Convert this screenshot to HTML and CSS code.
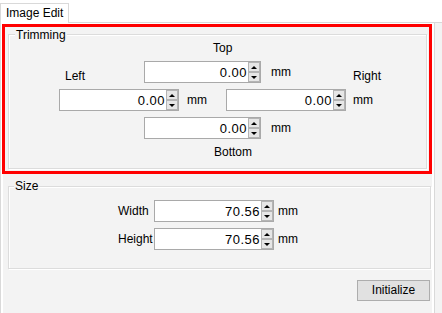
FILE: index.html
```html
<!DOCTYPE html>
<html>
<head>
<meta charset="utf-8">
<link rel="stylesheet" href="styles.css">
</head>
<body>
<div class="tabs"><div class="tab">Image Edit</div></div>
<div class="tabctl">
  <div class="display">
    <div class="page">
      <div class="group trim">
        <span class="legend">Trimming</span>
        <div class="trim-grid">
          <span class="lbl c-top">Top</span>
          <span class="lbl c-left">Left</span>
          <div class="spin s-top"><span class="val">0.00</span><span class="arrows"><span class="up"></span><span class="dn"></span></span></div>
          <span class="mm m-top">mm</span>
          <span class="lbl c-right">Right</span>

          <div class="spin s-left"><span class="val">0.00</span><span class="arrows"><span class="up"></span><span class="dn"></span></span></div>
          <span class="mm m-left">mm</span>
          <div class="spin s-right"><span class="val">0.00</span><span class="arrows"><span class="up"></span><span class="dn"></span></span></div>
          <span class="mm m-right">mm</span>

          <div class="spin s-bottom"><span class="val">0.00</span><span class="arrows"><span class="up"></span><span class="dn"></span></span></div>
          <span class="mm m-bottom">mm</span>

          <span class="lbl c-bottom">Bottom</span>
        </div>
      </div>

      <div class="group size">
        <span class="legend size-legend">Size</span>
        <div class="size-row">
          <span class="size-label">Width</span>
          <div class="spin s-size"><span class="val">70.56</span><span class="arrows"><span class="up"></span><span class="dn"></span></span></div>
          <span class="mm size-mm">mm</span>
        </div>
        <div class="size-row">
          <span class="size-label">Height</span>
          <div class="spin s-size"><span class="val">70.56</span><span class="arrows"><span class="up"></span><span class="dn"></span></span></div>
          <span class="mm size-mm">mm</span>
        </div>
      </div>

      <div class="btn-row"><button class="btn">Initialize</button></div>
    </div>
  </div>
</div>
<div class="highlight"></div>
</body>
</html>
```
FILE: styles.css
```css
html, body {
  margin: 0;
  height: 100%;
}
body {
  font-family: "Liberation Sans", Arial, sans-serif;
  font-size: 12px;
  color: #000;
  background: #fff;
  display: flex;
  flex-direction: column;
  overflow: hidden;
}
.tabs {
  height: 22px;
  flex: none;
  display: flex;
}
.tab {
  position: relative;
  z-index: 1;
  margin-top: 3px;
  height: 20px;
  width: 69px;
  box-sizing: border-box;
  border: 1px solid #d9d9d9;
  border-bottom: none;
  background: #fff;
  padding-left: 5px;
  line-height: 19px;
}
.tabctl {
  flex: 1;
  border-top: 1px solid #d9d9d9;
  background: #f3f3f3;
  display: flex;
}
.display {
  width: 435px;
  box-sizing: border-box;
  border-left: 1px solid #d9d9d9;
  border-right: 1px solid #d9d9d9;
  background: #fff;
  padding: 2px 2px 0;
  display: flex;
}
.page {
  flex: 1;
  background: #f3f3f3;
  padding: 9px 0 0 5px;
}
.group {
  position: relative;
  box-sizing: border-box;
  border: 1px solid #dcdcdc;
  box-shadow: 1px 1px 0 #fff, inset 1px 1px 0 #fff;
}
.legend {
  position: absolute;
  left: 6px;
  top: -7px;
  line-height: 14px;
  padding: 0 1px;
  background: #f3f3f3;
}
.size-legend {
  top: -8px;
  left: 5px;
}
.trim {
  width: 419px;
  height: 135px;
  padding: 6px 0 10px 0;
}
.trim-grid {
  display: grid;
  grid-template-columns: 50px 6px 79px 35px 8px 39px 35px 10px 75px 7px auto;
  grid-template-rows: 20px 28px 28px 27px 14px;
  align-items: start;
}
.lbl {
  line-height: 14px;
  white-space: nowrap;
}
.mm {
  line-height: 22px;
  white-space: nowrap;
}
.c-top { grid-column: 4 / 8; grid-row: 1; padding-left: 69px; }
.c-left { grid-column: 3; grid-row: 2; margin-top: 8px; }
.s-top { grid-column: 4 / 8; grid-row: 2; }
.m-top { grid-column: 9; grid-row: 2; }
.c-right { grid-column: 11; grid-row: 2; margin-top: 8px; }
.s-left { grid-column: 2 / 5; grid-row: 3; }
.m-left { grid-column: 6; grid-row: 3; }
.s-right { grid-column: 7 / 10; grid-row: 3; }
.m-right { grid-column: 11; grid-row: 3; }
.s-bottom { grid-column: 4 / 8; grid-row: 4; }
.m-bottom { grid-column: 9; grid-row: 4; }
.c-bottom { grid-column: 4 / 8; grid-row: 5; padding-left: 70px; margin-top: 1px; }

.spin {
  display: flex;
  box-sizing: border-box;
  height: 22px;
  border: 1px solid #a9a9a9;
  background: #fff;
}
.val {
  flex: 1;
  text-align: right;
  font-size: 13px;
  letter-spacing: 0.5px;
  line-height: 21px;
  padding-right: 1px;
}
.arrows {
  width: 12px;
  display: flex;
  flex-direction: column;
}
.up, .dn {
  flex: 1;
  box-sizing: border-box;
  border: 1px solid #b4b4b4;
  background: #e6e6e6;
  display: flex;
  align-items: center;
  justify-content: center;
}
.up::before {
  content: "";
  border-left: 3px solid transparent;
  border-right: 3px solid transparent;
  border-bottom: 3px solid #000;
}
.dn::before {
  content: "";
  border-left: 3px solid transparent;
  border-right: 3px solid transparent;
  border-top: 3px solid #000;
}

.size {
  width: 423px;
  margin-top: 17px;
  padding: 13px 0 18px;
}
.size-row {
  display: flex;
  align-items: center;
  padding-left: 109px;
  height: 22px;
}
.size-row + .size-row {
  margin-top: 6px;
}
.size-label {
  width: 36px;
  line-height: 22px;
}
.s-size {
  width: 120px;
}
.size-mm {
  margin-left: 4px;
}
.btn-row {
  width: 422px;
  display: flex;
  justify-content: flex-end;
  margin-top: 11px;
}
.btn {
  width: 73px;
  height: 21px;
  box-sizing: border-box;
  border: 1px solid #adadad;
  background: #e1e1e1;
  font: inherit;
  color: #000;
  text-align: center;
  line-height: 19px;
  padding: 0;
}
.highlight {
  position: absolute;
  left: 2px;
  top: 24px;
  width: 430px;
  height: 150px;
  box-sizing: border-box;
  border: 3px solid #ff0000;
  pointer-events: none;
}
```
